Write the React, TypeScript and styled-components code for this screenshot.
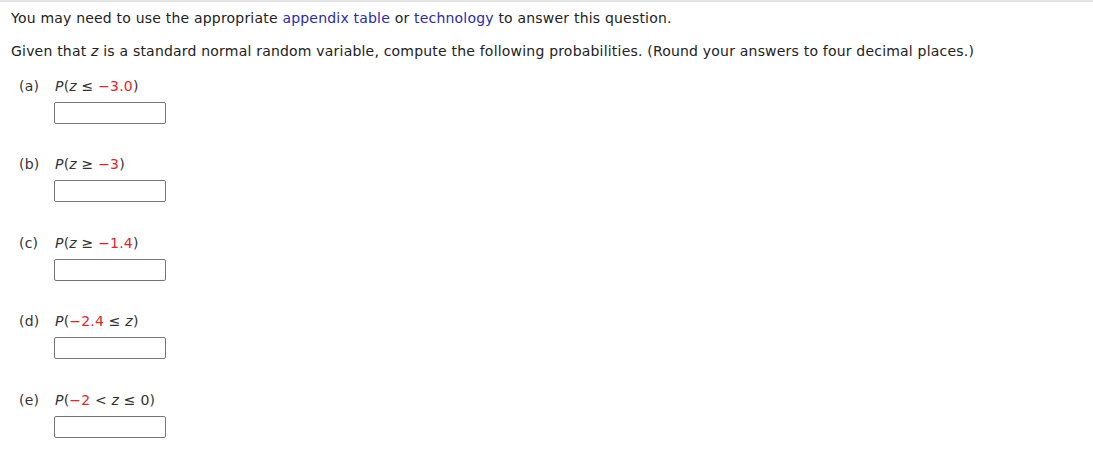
import React from 'react'
import styled, { createGlobalStyle } from 'styled-components'

const GlobalStyle = createGlobalStyle`
  body {
    margin: 0;
    background: #fff;
    font-family: 'DejaVu Sans', Verdana, sans-serif;
    color: #222;
  }
`

const Question = styled.div`
  border-top: 2px solid #e3e3e3;
  padding: 8px 11px 20px 11px;
  font-size: 14px;
  letter-spacing: 0.2px;
  line-height: 16px;
`

const Para = styled.p`
  margin: 0 0 17px 0;
`

const Ref = styled.span`
  color: #2a2ab3;
`

const Parts = styled.div`
  display: flex;
  flex-direction: column;
  gap: 32px;
  padding: 2px 0 0 8px;
`

const Part = styled.div`
  display: grid;
  grid-template-columns: 36px auto;
  row-gap: 8px;

  &:nth-child(even) {
    margin-bottom: 1px;
  }
`

const Letter = styled.span`
  color: #333;
`

const Expr = styled.span`
  color: #333;
`

const Var = styled.i`
  font-style: italic;
`

const Given = styled.span`
  color: #e3242b;
`

const Answer = styled.input`
  grid-column: 2;
  width: 112px;
  height: 22px;
  box-sizing: border-box;
  border: 1px solid #767676;
  border-radius: 2px;
  margin: 0 0 0 -1px;
  padding: 0;
`

const parts: { id: string; expr: React.ReactNode }[] = [
  { id: 'a', expr: <><Var>P</Var>(<Var>z</Var> ≤ <Given>−3.0</Given>)</> },
  { id: 'b', expr: <><Var>P</Var>(<Var>z</Var> ≥ <Given>−3</Given>)</> },
  { id: 'c', expr: <><Var>P</Var>(<Var>z</Var> ≥ <Given>−1.4</Given>)</> },
  { id: 'd', expr: <><Var>P</Var>(<Given>−2.4</Given> ≤ <Var>z</Var>)</> },
  { id: 'e', expr: <><Var>P</Var>(<Given>−2</Given> &lt; <Var>z</Var> ≤ 0)</> },
]

const App = () => (
  <>
    <GlobalStyle />
    <Question>
      <Para>
        You may need to use the appropriate <Ref>appendix table</Ref> or <Ref>technology</Ref> to answer this question.
      </Para>
      <Para>
        Given that <Var>z</Var> is a standard normal random variable, compute the following probabilities. (Round your answers to four decimal places.)
      </Para>
      <Parts>
        {parts.map((p) => (
          <Part key={p.id}>
            <Letter>({p.id})</Letter>
            <Expr>{p.expr}</Expr>
            <Answer type="text" />
          </Part>
        ))}
      </Parts>
    </Question>
  </>
)

export default App
